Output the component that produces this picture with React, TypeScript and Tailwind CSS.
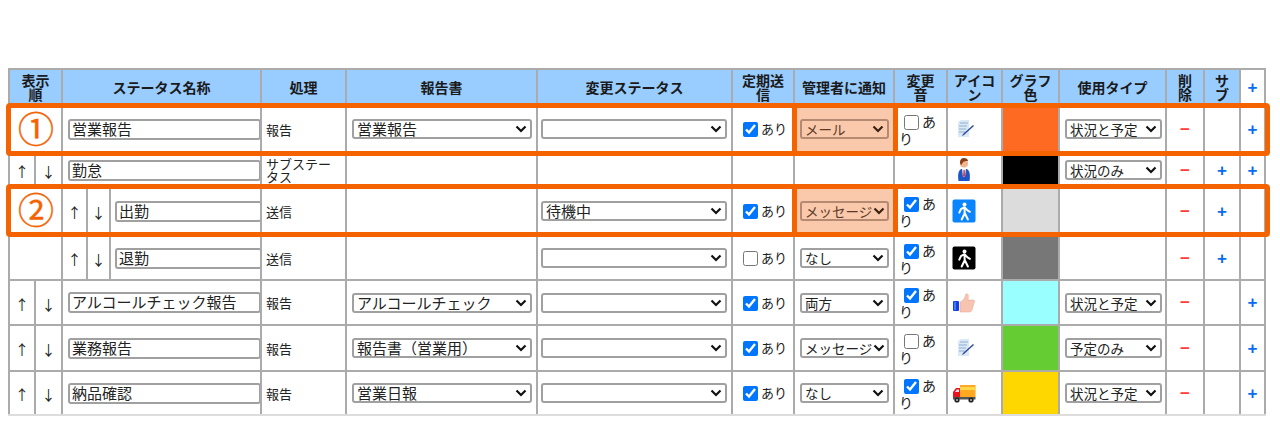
import React from "react";

const widths = [26, 27, 25, 23, 151, 85, 191, 195, 62, 100, 53, 55, 57, 107, 38, 36, 25];

const Doc = () => (
  <svg width="24" height="24" viewBox="0 0 24 24" className="block">
    <path d="M6 5l3-2h8v17H6z" fill="#dbe8f5" />
    <path d="M8 6h8M7 9h8M7 12h7M7 15h6" stroke="#8fb0d6" strokeWidth="1.1" />
    <path d="M11 17l10-9 1 1-10 9-2 1z" fill="#2f4a96" />
  </svg>
);
const Person = () => (
  <svg width="24" height="24" viewBox="0 0 24 24" className="block">
    <path d="M6.5 23c-1-7 0-11 3-12h5c3 1 4 5 3 12z" fill="#1c55c8" />
    <path d="M10 11h4l-1 8h-2z" fill="#eee" />
    <path d="M11.5 12h1.2l.4 6-1 1.5-1-1.5z" fill="#d33" />
    <circle cx="12" cy="5.5" r="4" fill="#f0b48f" />
    <path d="M8 5c0-4 2-5 4-5s4 1 4 3c-3 0-5 0-6 3l-1 1z" fill="#8a3d12" />
  </svg>
);
const Walk = ({ bg }: { bg: string }) => (
  <svg width="24" height="24" viewBox="0 0 24 24" className="block">
    <rect x="0.5" y="0.5" width="23" height="23" rx="2" fill={bg} />
    <circle cx="12.5" cy="5.5" r="2" fill="#fff" />
    <path d="M12.5 8.2l-3.6 2-1.6 3.4M12.5 8.2l3 3.2 2.4 1.4M12.5 8.2l.2 6-3 6.3M12.7 14l3.2 6.5" stroke="#fff" strokeWidth="2" fill="none" strokeLinecap="round" strokeLinejoin="round" />
  </svg>
);
const Thumb = () => (
  <svg width="24" height="24" viewBox="0 0 24 24" className="block">
    <rect x="1" y="10" width="6" height="10" rx="1" fill="#1440e0" />
    <rect x="2" y="11" width="2" height="8" fill="#3c7cff" />
    <path d="M8 11c3-1 5-4 6-8 2-1 3 1 2 6h5c2 0 2 2 1 3l-2 7c-1 2-2 2-4 2h-8z" fill="#f6c4b0" stroke="#e8a290" strokeWidth="0.5" />
  </svg>
);
const Truck = () => (
  <svg width="24" height="24" viewBox="0 0 24 24" className="block">
    <rect x="8" y="4" width="15.5" height="12" fill="#ffa820" />
    <rect x="8" y="6" width="15.5" height="3" fill="#ffd84a" />
    <path d="M1 11l3-4h4v10H1z" fill="#e8141c" />
    <path d="M3 11l1.8-2.6H7V11z" fill="#cfe6f5" />
    <rect x="1" y="16" width="22.5" height="2.5" fill="#555" />
    <circle cx="5" cy="19" r="2.6" fill="#222" />
    <circle cx="5" cy="19" r="1" fill="#bbb" />
    <circle cx="19" cy="19" r="2.6" fill="#222" />
    <circle cx="19" cy="19" r="1" fill="#bbb" />
  </svg>
);

const Sel = ({ value, w, tone, small }: { value: string; w: string; tone?: boolean; small?: boolean }) => (
  <div
    role="combobox"
    className={`${w} flex h-[20px] items-center justify-between overflow-hidden rounded-[3px] border-2 pl-[3px] pr-[3px] leading-[16px] ${
      small ? "text-[13.5px]" : "text-[15px]"
    } ${tone ? "border-[#b58a70] text-[#5b3b28]" : "border-[#a0a0a0] bg-white text-[#222]"}`}
  >
    <span className="whitespace-nowrap">{value}</span>
    <svg width="12" height="8" viewBox="0 0 12 8" className="ml-[1px] shrink-0">
      <path d="M1.5 1.5L6 6l4.5-4.5" stroke={tone ? "#3a2010" : "#111"} strokeWidth="2.2" fill="none" />
    </svg>
  </div>
);

const Check = ({ on, ml }: { on: boolean; ml: string }) => (
  <input type="checkbox" defaultChecked={on} className={`${ml} mr-[3px] h-[15px] w-[15px] align-[-3px]`} />
);

const Minus = () => <span className="font-['Liberation_Sans'] text-[17px] font-bold text-[#ff3b3b]">−</span>;
const Plus = () => <span className="font-['Liberation_Sans'] text-[17px] font-bold text-[#0a6cf0]">+</span>;
const Up = () => <span className="text-[14px]">↑</span>;
const Down = () => <span className="text-[14px]">↓</span>;

type Row = {
  h: string;
  sub?: boolean;
  order?: boolean;
  name: string;
  proc: React.ReactNode;
  reporter?: string;
  next?: string;
  periodic?: boolean;
  notify?: string;
  pink?: boolean;
  sound?: boolean;
  icon: React.ReactNode;
  color: string;
  type?: string;
  del?: boolean;
  addSub?: boolean;
  add?: boolean;
};

const rows: Row[] = [
  { h: "h-[50px]", name: "営業報告", proc: "報告", reporter: "営業報告", next: "", periodic: true, notify: "メール", pink: true, sound: false, icon: <Doc />, color: "bg-[#ff6a22]", type: "状況と予定", del: true, add: true },
  { h: "h-[32px]", order: true, name: "勤怠", proc: <>サブステー<br />タス</>, icon: <Person />, color: "bg-[#000000]", type: "状況のみ", del: true, addSub: true, add: true },
  { h: "h-[50px]", sub: true, name: "出勤", proc: "送信", next: "待機中", periodic: true, notify: "メッセージ", pink: true, sound: true, icon: <Walk bg="#0a84ff" />, color: "bg-[#dcdcdc]", del: true, addSub: true },
  { h: "h-[44px]", sub: true, name: "退勤", proc: "送信", next: "", periodic: false, notify: "なし", sound: true, icon: <Walk bg="#000000" />, color: "bg-[#777777]", del: true, addSub: true },
  { h: "h-[45px]", order: true, name: "アルコールチェック報告", proc: "報告", reporter: "アルコールチェック", next: "", periodic: true, notify: "両方", sound: true, icon: <Thumb />, color: "bg-[#99ffff]", type: "状況と予定", del: true, add: true },
  { h: "h-[46px]", order: true, name: "業務報告", proc: "報告", reporter: "報告書（営業用）", next: "", periodic: true, notify: "メッセージ", sound: false, icon: <Doc />, color: "bg-[#66cc33]", type: "予定のみ", del: true, add: true },
  { h: "h-[44px]", order: true, name: "納品確認", proc: "報告", reporter: "営業日報", next: "", periodic: true, notify: "なし", sound: true, icon: <Truck />, color: "bg-[#ffd700]", type: "状況と予定", del: true, add: true },
];

const headers: [React.ReactNode, number][] = [
  [<>表示<br />順</>, 2],
  ["ステータス名称", 3],
  ["処理", 1],
  ["報告書", 1],
  ["変更ステータス", 1],
  [<>定期送<br />信</>, 1],
  ["管理者に通知", 1],
  [<>変更<br />音</>, 1],
  [<>アイコ<br />ン</>, 1],
  [<>グラフ<br />色</>, 1],
  ["使用タイプ", 1],
  [<>削<br />除</>, 1],
  [<>サ<br />ブ</>, 1],
];

const td = "border-2 border-[#ababab] p-0";

export default function App() {
  return (
    <div className="relative h-[426px] w-[1280px] overflow-hidden bg-white pl-[8px] pt-[68px] font-['Noto_Sans_CJK_JP',sans-serif] text-[#222]">
      <table className="w-[1258px] table-fixed border-collapse">
        <colgroup>
          {widths.map((w, i) => (
            <col key={i} style={{ width: w }} />
          ))}
        </colgroup>
        <thead>
          <tr className="h-[35px]">
            {headers.map(([t, span], i) => (
              <th key={i} colSpan={span} className={`${td} bg-[#99ccff] text-center text-[14px] font-bold leading-[14px] text-[#1a1a1a]`}>
                {t}
              </th>
            ))}
            <th className={`${td} text-center leading-[14px]`}>
              <Plus />
            </th>
          </tr>
        </thead>
        <tbody>
          {rows.map((r, i) => (
            <tr key={i} className={`${r.h} ${i === rows.length - 1 ? "[&>td]:border-b-[#dddddd]" : ""}`}>
              {r.sub ? (
                <>
                  <td colSpan={2} className={td} />
                  <td className={`${td} text-center`}><Up /></td>
                  <td className={`${td} text-center`}><Down /></td>
                </>
              ) : r.order ? (
                <>
                  <td className={`${td} text-center`}><Up /></td>
                  <td className={`${td} text-center`}><Down /></td>
                </>
              ) : (
                <td colSpan={2} className={td} />
              )}
              <td colSpan={r.sub ? 1 : 3} className={`${td} ${r.sub ? "pl-[4px]" : "pl-[5px]"}`}>
                <input
                  defaultValue={r.name}
                  className={`${r.sub ? "w-[147px]" : "w-[193px]"} block h-[21px] rounded-[3px] border-2 border-[#a0a0a0] bg-white px-[2px] text-[15px] text-[#222]`}
                />
              </td>
              <td className={`${td} pl-[4px] text-[13px] leading-[13px]`}>{r.proc}</td>
              <td className={`${td} pl-[5px]`}>{r.reporter && <Sel value={r.reporter} w="w-[180px]" />}</td>
              <td className={`${td} pl-[3px]`}>{r.next !== undefined && <Sel value={r.next} w="w-[186px]" />}</td>
              <td className={`${td} text-[13px]`}>
                {r.periodic !== undefined && (
                  <>
                    <Check on={r.periodic} ml="ml-[10px]" />
                    あり
                  </>
                )}
              </td>
              <td className={`${td} pl-[5px] ${r.pink ? "bg-[#fac9ab]" : ""}`}>
                {r.notify && <Sel value={r.notify} w="w-[89px]" tone={r.pink} small />}
              </td>
              <td className={`${td} pl-[4px] pr-[2px] text-[14px] leading-[16px]`}>
                {r.sound !== undefined && (
                  <>
                    <Check on={r.sound} ml="ml-[5px]" />
                    あり
                  </>
                )}
              </td>
              <td className={`${td} pl-[4px]`}>{r.icon}</td>
              <td className={`${td} ${r.color}`} />
              <td className={`${td} pl-[5px]`}>{r.type && <Sel value={r.type} w="w-[97px]" small />}</td>
              <td className={`${td} text-center`}>{r.del && <Minus />}</td>
              <td className={`${td} text-center`}>{r.addSub && <Plus />}</td>
              <td className={`${td} text-center`}>{r.add && <Plus />}</td>
            </tr>
          ))}
        </tbody>
      </table>

      {[
        { top: "top-[103px]", n: "①" },
        { top: "top-[184px]", n: "②" },
      ].map((b) => (
        <div key={b.n} className={`absolute left-[6px] ${b.top} h-[53px] w-[1264px] rounded-[4px] border-[5px] border-[#f56200]`}>
          <span className="absolute left-[7px] top-[-1px] text-[36px] leading-[40px] text-[#f56200] [-webkit-text-stroke:0.4px_#f56200]">{b.n}</span>
          <div className="absolute bottom-0 left-[781px] top-0 w-[5px] bg-[#f56200]" />
          <div className="absolute bottom-0 left-[882px] top-0 w-[5px] bg-[#f56200]" />
        </div>
      ))}
    </div>
  );
}
